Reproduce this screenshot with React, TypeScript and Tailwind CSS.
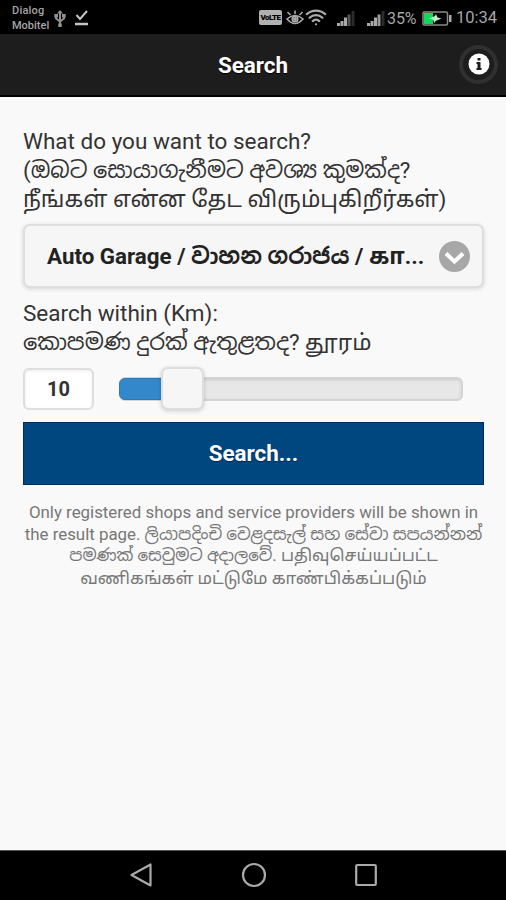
import { Wifi } from "lucide-react";

function Signal({ weak = false }: { weak?: boolean }) {
  return (
    <svg width="18" height="16" viewBox="0 0 18 16">
      <path d="M0 13h3v3H0zM3.500 11h3v5h-3zM7 7.500h3V16H7z" fill="#aaa" />
      <path d="M10.500 4.500h3V16h-3z" fill={weak ? "#555" : "#999"} />
      <path d="M14.500 1h3v15h-3z" fill="#2b2b2b" />
    </svg>
  );
}

function StatusBar() {
  return (
    <div className="flex h-[34px] shrink-0 items-center bg-black pl-3 pr-[9px] text-[#a5a5a5]">
      <div className="w-[42px] whitespace-nowrap pt-0.5 text-[11px] font-medium leading-[15.500px]">
        <div className="tracking-[0.2px]">Dialog</div>
        <div>Mobitel</div>
      </div>
      <svg className="mt-[3px]" width="12" height="18" viewBox="0 0 12 18" fill="none" stroke="#8f8f8f" strokeWidth="2">
        <path d="M6 2v14M2 5v3.500l4 3 4-3V5" />
        <path d="M6 0l3 3.500H3zM0.300 4h3.700v3.500H0.300zM8 4h3.700v3.500H8zM4.200 13.500h3.600V17H4.200z" fill="#8f8f8f" stroke="none" />
      </svg>
      <svg className="ml-[9px] mt-0.5" width="13" height="16" viewBox="0 0 13 16" fill="none" stroke="#c4c4c4">
        <path d="M1.500 5l3.500 4 7-8" strokeWidth="2" />
        <path d="M0 14h13" strokeWidth="2.500" />
      </svg>
      <div className="ml-auto flex items-center pt-[2px]">
        <div className="mb-px flex h-[15px] w-[23px] items-center justify-center rounded-[2px] bg-[#b0b0b0] text-[8px] font-black tracking-[-0.5px] text-black">
          VoLTE
        </div>
        <svg className="ml-[4px] mb-px" width="18" height="17" viewBox="0 0 18 17" fill="none" stroke="#aaa" strokeWidth="1.600">
          <path d="M1 10Q9 3 17 10Q9 19 1 10z" />
          <circle cx="9" cy="10" r="2.800" />
          <path d="M9 5V1.500M4.500 6L1.500 3M13.500 6l3-3" />
          <circle cx="9" cy="10" r="1.200" fill="#aaa" />
        </svg>
        <Wifi className="mb-[2px] ml-[1px]" width={22} height={22} strokeWidth={2.500} color="#aaa" />
        <div className="ml-[10px]"><Signal weak /></div>
        <div className="ml-[12px]"><Signal /></div>
        <span className="ml-[2px] w-[31px] whitespace-nowrap pt-px text-[16px] tracking-[-0.1px]">35%</span>
        <svg className="ml-[4px]" width="30" height="15" viewBox="0 0 30 15">
          <rect x="1" y="1" width="24.500" height="13" rx="1.500" fill="none" stroke="#8b8b8b" strokeWidth="1.500" />
          <path d="M2 2h9v11H2z" fill="#0edb55" />
          <path d="M7 7.500l6-2.500 1-2 1.500 3.500 4 1-6 2.500-1 2-1.500-3.500z" fill="#c5e9cf" />
          <path d="M27 4h2.500v7H27z" fill="#aaa" />
        </svg>
        <span className="ml-[4px] w-[41px] whitespace-nowrap pt-px text-[16.500px]">10:34</span>
      </div>
    </div>
  );
}

function Header() {
  return (
    <header className="flex h-[63px] shrink-0 items-center border-b-2 border-black bg-[#1d1d1d] text-white">
      <div className="w-[47px]" />
      <h1 className="flex-1 pt-[3px] text-center text-[22.400px] font-bold [text-shadow:0_1px_1px_#000]">Search</h1>
      <button className="mb-px mr-[8px] flex size-[39px] items-center justify-center rounded-full border-4 border-[#303030] bg-[#1d1d1d]">
        <svg width="22" height="22" viewBox="0 0 22 22">
          <circle cx="11" cy="11" r="10.500" fill="#fff" />
          <path d="M9.500 5h3v2.500h-3zM8.500 9h4v6h1v2h-5v-2h1v-4h-1z" fill="#1d1d1d" />
        </svg>
      </button>
    </header>
  );
}

function NavBar() {
  return (
    <nav className="flex h-[50px] shrink-0 items-center justify-between border-t border-[#555] bg-black pb-[2px] pl-[129px] pr-[129px]">
      <svg width="24" height="26" viewBox="0 0 24 26" fill="none" stroke="#aaa" strokeWidth="2.200" strokeLinejoin="round">
        <path d="M21.500 2.500v21L2.500 13z" />
      </svg>
      <svg width="26" height="26" viewBox="0 0 26 26" fill="none" stroke="#aaa" strokeWidth="2.200">
        <circle cx="13" cy="13" r="11" />
      </svg>
      <svg width="22" height="24" viewBox="0 0 22 24" fill="none" stroke="#aaa" strokeWidth="2.200">
        <rect x="1.200" y="2" width="19.600" height="20" rx="1" />
      </svg>
    </nav>
  );
}

export default function App() {
  return (
    <div className="flex h-[900px] w-[506px] flex-col overflow-hidden bg-[#f9f9f9] font-['Roboto','Noto_Sans_Sinhala','Noto_Sans_Tamil','Noto_Sans',sans-serif] text-[#333]">
      <StatusBar />
      <Header />
      <main className="flex flex-1 flex-col pl-[23px] pr-[22px] pt-[30px]">
        <div className="whitespace-nowrap text-[22.500px] leading-[29px]">
          <div className="h-[29px]">What do you want to search?</div>
          <div className="h-[29px] text-[22.400px]">(ඔබට සොයාගැනීමට අවශ්‍ය කුමක්ද?</div>
          <div className="h-[29px] text-[22.650px]">நீங்கள் என்ன தேட விரும்புகிறீர்கள்)</div>
        </div>
        <button className="mt-[10px] flex h-[64px] shrink-0 items-center rounded-[7px] border-2 border-[#dedede] bg-[#f6f6f6] pl-[22px] pr-[12px] text-left text-[22.350px] font-bold text-[#222] shadow-[0_1px_4px_rgba(0,0,0,0.15)]">
          <span className="w-[385px] whitespace-nowrap leading-8">Auto Garage / වාහන ගරාජය / கா...</span>
          <svg className="ml-auto shrink-0" width="31" height="31" viewBox="0 0 31 31">
            <circle cx="15.500" cy="15.500" r="15.500" fill="#a7a7a7" />
            <path d="M7 12.500l8.500 8 8.500-8" fill="none" stroke="#fff" strokeWidth="4" />
          </svg>
        </button>
        <div className="mt-[11px] whitespace-nowrap text-[22.500px] leading-[29px]">
          <div className="h-[29px]">Search within (Km):</div>
          <div className="h-[29px]">කොපමණ දුරක් ඇතුළතද? தூரம்</div>
        </div>
        <div className="mt-[10px] flex h-[43px] shrink-0 items-center">
          <div className="flex h-[42px] w-[71px] items-center justify-center rounded-[6px] border-2 border-[#dedede] bg-white text-[20px] font-bold shadow-[inset_0_1px_3px_rgba(0,0,0,0.08)]">10</div>
          <div className="ml-[25px] flex h-[24px] w-[344px] items-center rounded-[6px] border-2 border-[#d4d4d4] bg-[#e7e7e7] shadow-[inset_0_1px_3px_rgba(0,0,0,0.12)]">
            <div className="-ml-[2px] h-[22px] w-[46px] shrink-0 rounded-l-[6px] border border-[#2a7ab9] bg-[#3388cc]" />
            <div className="-ml-[4px] size-[43px] shrink-0 rounded-[7px] border-2 border-[#dedede] bg-[#f6f6f6] shadow-[0_1px_4px_rgba(0,0,0,0.18)]" />
          </div>
        </div>
        <button className="mt-[12px] h-[63px] shrink-0 border border-[#002b62] bg-[#00467f] text-[22.400px] font-bold text-white [text-shadow:0_1px_1px_#002a55]">Search...</button>
        <div className="mt-[16px] whitespace-nowrap text-center text-[16.860px] leading-[22px] text-[#777]">
          <div className="h-[22px]">Only registered shops and service providers will be shown in</div>
          <div className="h-[22px]">the result page. ලියාපදිංචි වෙළදසැල් සහ සේවා සපයන්නන්</div>
          <div className="h-[22px] text-[16.700px]">පමණක් සෙවුමට අදාලවේ. பதிவுசெய்யப்பட்ட</div>
          <div className="h-[22px]">வணிகங்கள் மட்டுமே காண்பிக்கப்படும்</div>
        </div>
      </main>
      <NavBar />
    </div>
  );
}
